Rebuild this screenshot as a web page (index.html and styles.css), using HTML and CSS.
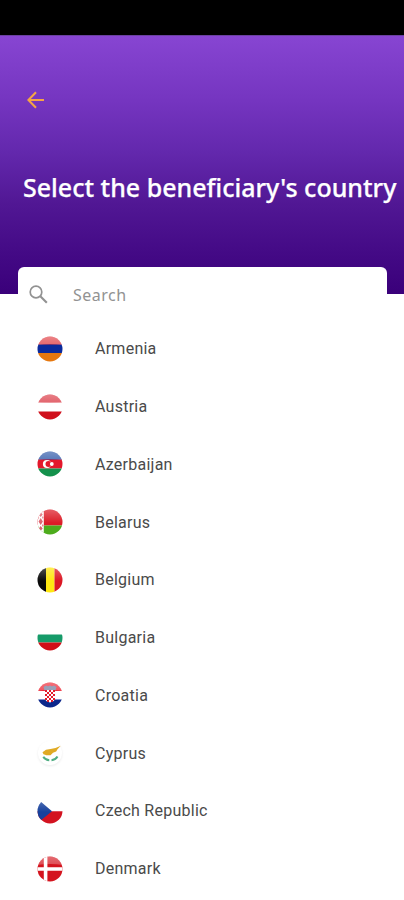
FILE: index.html
```
<!DOCTYPE html>
<html lang="en">
<head>
<meta charset="utf-8">
<title>Select the beneficiary's country</title>
<link rel="stylesheet" href="styles.css">
</head>
<body>
<svg class="defs" width="0" height="0" aria-hidden="true">
  <defs>
    <clipPath id="disc"><circle cx="13" cy="13" r="12.5"/></clipPath>
    <linearGradient id="shine" x1="0" y1="0" x2="0" y2="1">
      <stop offset="0" stop-color="#fff" stop-opacity=".38"/>
      <stop offset="1" stop-color="#fff" stop-opacity=".24"/>
    </linearGradient>
    <linearGradient id="soft" x1="0" y1="0" x2="0" y2="1">
      <stop offset="0" stop-color="#fff" stop-opacity=".3"/>
      <stop offset="1" stop-color="#fff" stop-opacity="0"/>
    </linearGradient>
    <path id="gloss" d="M0 0H26V9Q13 7 0 9Z" fill="url(#shine)"/>
    <path id="sheen" d="M0 0H26V14H0Z" fill="url(#soft)"/>
  </defs>
</svg>
<div class="screen">
  <div class="status-bar"></div>
  <header class="header">
    <svg class="back" viewBox="0 0 18 18"><path d="M17 9H2M9 1.2L1.4 9L9 16.8" fill="none" stroke="#f5a544" stroke-width="2.1"/></svg>
    <h1 class="title">Select the beneficiary's country</h1>
  </header>
  <main class="panel">
    <div class="search">
      <svg class="search-icon" viewBox="0 0 19 19"><circle cx="7" cy="7" r="5.8" fill="none" stroke="#929292" stroke-width="1.7"/><path d="M11.3 11.3L17.8 17.8" stroke="#929292" stroke-width="2.1"/></svg>
      <span class="search-text">Search</span>
    </div>
    <ul class="list">
      <li class="row"><svg class="flag" viewBox="0 0 26 26"><g clip-path="url(#disc)"><path fill="#e0393f" d="M0 0H26V9H0z"/><path fill="#0b2a9c" d="M0 8.5H26V17H0z"/><path fill="#e6780f" d="M0 17H26V26H0z"/><use href="#gloss"/></g></svg><span>Armenia</span></li>
      <li class="row"><svg class="flag" viewBox="0 0 26 26"><g clip-path="url(#disc)"><path fill="#fff" d="M0 0H26V26H0z"/><path fill="#d9323e" d="M0 0H26V8.5H0z"/><path fill="#d0101c" d="M0 17.5H26V26H0z"/><use href="#gloss"/></g></svg><span>Austria</span></li>
      <li class="row"><svg class="flag" viewBox="0 0 26 26"><g clip-path="url(#disc)"><path fill="#2450a4" d="M0 0H26V9H0z"/><path fill="#e3182b" d="M0 8.5H26V17.5H0z"/><path fill="#14914c" d="M0 17.5H26V26H0z"/><use href="#gloss"/><circle cx="10" cy="13" r="4.1" fill="#fff"/><circle cx="11.5" cy="13" r="3" fill="#e3182b"/><circle cx="14.8" cy="13" r="1.9" fill="#fff"/></g></svg><span>Azerbaijan</span></li>
      <li class="row"><svg class="flag" viewBox="0 0 26 26"><g clip-path="url(#disc)"><path fill="#dc1c27" d="M0 0H26V16.5H0z"/><path fill="#4dac1c" d="M0 16.5H26V26H0z"/><path fill="#fff" d="M0 0H6.8V26H0z"/><path fill="#dd6470" d="M3.7 3.2l2 2.4-2 2.4-2-2.4zM3.7 9l2.2 3.5-2.2 3.5-2.2-3.5zM3.7 17l2 2.4-2 2.4-2-2.4z"/><path fill="#e58b94" d="M1.3 7.5l1 1.500-1 1.500zM5.8 7l1 1.500-1 1.500-1-1.500zM5.8 15l1 1.500-1 1.500-1-1.500z"/><use href="#sheen"/></g></svg><span>Belarus</span></li>
      <li class="row"><svg class="flag" viewBox="0 0 26 26"><g clip-path="url(#disc)"><path fill="#090909" d="M0 0H9V26H0z"/><path fill="#ffe711" d="M9 0H17.5V26H9z"/><path fill="#db1723" d="M17.5 0H26V26H17.5z"/><use href="#sheen"/></g></svg><span>Belgium</span></li>
      <li class="row"><svg class="flag" viewBox="0 0 26 26"><g clip-path="url(#disc)"><path fill="#fff" d="M0 0H26V10H0z"/><path fill="#169b69" d="M0 9.5H26V17.5H0z"/><path fill="#d00f18" d="M0 17.5H26V26H0z"/></g></svg><span>Bulgaria</span></li>
      <li class="row"><svg class="flag" viewBox="0 0 26 26"><g clip-path="url(#disc)"><path fill="#fff" d="M0 0H26V26H0z"/><path fill="#ec1d2c" d="M0 0H26V9H0z"/><path fill="#0c278b" d="M0 17.5H26V26H0z"/><use href="#gloss"/><path fill="#98a0b8" d="M6.5 5l2.5-1.5 2 .8 2-.8 2 .8 2-.8L19.5 5l-1 3.5h-11z"/><path fill="#fff" d="M8 8H18V16Q18 19.5 13 20.5Q8 19.5 8 16z"/><path fill="#e31d2d" d="M8 8h2v2H8zM12 8h2v2h-2zM16 8h2v2h-2zM10 10h2v2h-2zM14 10h2v2h-2zM8 12h2v2H8zM12 12h2v2h-2zM16 12h2v2h-2zM10 14h2v2h-2zM14 14h2v2h-2zM8 16h2v2H8zM12 16h2v2h-2zM16 16h2v2h-2zM10 18h2v2h-2zM14 18h2v2h-2z"/></g></svg><span>Croatia</span></li>
      <li class="row"><svg class="flag cyprus" viewBox="0 0 26 26"><circle cx="13" cy="13" r="12" fill="#fff"/><path fill="#e0aa24" d="M5.5 12.2L9 9.8 13.5 9 18.5 8 23.8 5.8 20.5 9.3 19.2 11.5 16 12.8 13.5 15.2 9.5 15.3 6.5 14.2z"/><path fill="none" stroke="#50ae83" stroke-width="2" d="M6.3 16.7Q8.3 20 12.3 20.2M20.5 16.5Q18.5 19.9 14.5 20.2"/></svg><span>Cyprus</span></li>
      <li class="row"><svg class="flag" viewBox="0 0 26 26"><g clip-path="url(#disc)"><path fill="#fff" d="M0 0H26V13.5H0z"/><path fill="#d31320" d="M0 13.3H26V26H0z"/><path fill="#17419c" d="M0 0L3 3 15 13.3 3 23 0 26z"/><use href="#sheen"/></g></svg><span>Czech Republic</span></li>
      <li class="row"><svg class="flag" viewBox="0 0 26 26"><g clip-path="url(#disc)"><path fill="#d4141e" d="M0 0H26V26H0z"/><use href="#gloss"/><path fill="#fff" d="M6.8 0H10.4V26H6.8zM0 11.2H26V14.8H0z"/></g></svg><span>Denmark</span></li>
    </ul>
  </main>
</div>
</body>
</html>
```
FILE: styles.css
```
* { box-sizing: border-box; }
body { margin: 0; background: #fff; }
.defs { display: block; }
.screen { width: 404px; height: 900px; overflow: hidden; background: #fff; }
.status-bar { height: 35px; background: #000; }
.header {
  height: 259px;
  padding: 55px 0 0 23px;
  border-top: 1px solid #6a40a0;
  background: linear-gradient(180deg, #8745d2 0%, #7535c0 25%, #6328ad 45%, #511794 65%, #430985 85%, #3a007a 100%);
}
.back { display: block; width: 18px; height: 18px; margin: 0 0 0 4px; }
.title {
  margin: 51px 0 0;
  font: 500 25px/54px "Noto Sans", sans-serif;
  -webkit-text-stroke: 0.25px #fff;
  color: #fff;
  white-space: nowrap;
}
.panel { margin: -27px 17px 0 18px; background: #fff; border-radius: 6px 6px 0 0; }
.search { display: flex; align-items: center; height: 53px; padding: 2px 0 0 11px; }
.search-icon { width: 19px; height: 19px; }
.search-text { margin-left: 25px; font: 16px/24px "Noto Sans", sans-serif; letter-spacing: 0.5px; color: #929292; }
.list { margin: 0; padding: 0; list-style: none; }
.row {
  display: flex;
  align-items: center;
  height: 57.75px;
  padding-left: 18.5px;
  font: 16px/25px Roboto, sans-serif;
  letter-spacing: 0.25px;
  color: #4a4a4a;
}
.flag { width: 26px; height: 26px; margin: 0 32.5px 0 0; }
.cyprus { filter: drop-shadow(0 1px 1px rgba(0, 0, 0, 0.08)); }
```
